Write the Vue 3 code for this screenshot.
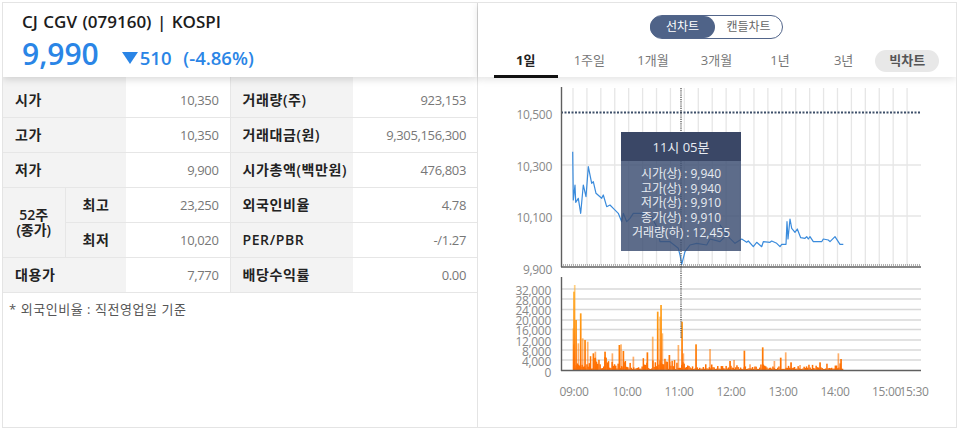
<script setup>
const rows = [
  { label: '시가', value: '10,350', label2: '거래량(주)', value2: '923,153' },
  { label: '고가', value: '10,350', label2: '거래대금(원)', value2: '9,305,156,300' },
  { label: '저가', value: '9,900', label2: '시가총액(백만원)', value2: '476,803' },
  { group: '52주<br>(종가)', sub: '최고', value: '23,250', label2: '외국인비율', value2: '4.78' },
  { sub: '최저', value: '10,020', label2: 'PER/PBR', value2: '-/1.27' },
  { label: '대용가', value: '7,770', label2: '배당수익률', value2: '0.00' }
]

const tabs = ['1일', '1주일', '1개월', '3개월', '1년', '3년']
const tooltip = ['시가(상) : 9,940', '고가(상) : 9,940', '저가(상) : 9,910', '종가(상) : 9,910', '거래량(하) : 12,455']

const priceLabels = [
  { y: 118.7, text: '10,500' },
  { y: 170.5, text: '10,300' },
  { y: 221.5, text: '10,100' },
  { y: 273.5, text: '9,900' }
]
const volumeLabels = [
  { y: 294.5, text: '32,000' },
  { y: 304.5, text: '28,000' },
  { y: 314.5, text: '24,000' },
  { y: 325, text: '20,000' },
  { y: 335, text: '16,000' },
  { y: 345.5, text: '12,000' },
  { y: 356, text: '8,000' },
  { y: 365.5, text: '4,000' },
  { y: 376.5, text: '0' }
]
const timeLabels = [
  { x: 574, text: '09:00' },
  { x: 627, text: '10:00' },
  { x: 679, text: '11:00' },
  { x: 731, text: '12:00' },
  { x: 783, text: '13:00' },
  { x: 835, text: '14:00' },
  { x: 886.5, text: '15:00' },
  { x: 914, text: '15:30' }
]

const gridX = Array.from({ length: 25 }, (_, i) => 573 + i * 13.92)
const volumeGrid = [289, 299, 309.5, 320, 329.5, 340, 350, 360]

// picked off the reference crops, left crop starts at x=510 and right crop at x=720, both at 3x
const leftLine = [
  [188, 200], [190, 345], [195, 300], [197, 352], [205, 340], [212, 385], [220, 300], [228, 335], [235, 245],
  [245, 295], [250, 290], [258, 325], [275, 340], [280, 330], [290, 365], [300, 360], [310, 370], [325, 385],
  [335, 410], [340, 385], [350, 410], [360, 400], [370, 385], [400, 385], [425, 395], [440, 425], [450, 470],
  [480, 470], [505, 490], [510, 510], [515, 538], [525, 500], [540, 480], [560, 475], [590, 480], [600, 462],
  [630, 470], [650, 450]
]
const rightLine = [
  [0, 420], [15, 440], [30, 460], [45, 475], [65, 462], [80, 472], [85, 468], [100, 485], [110, 472], [125, 485],
  [130, 470], [150, 472], [155, 468], [170, 475], [180, 485], [185, 478], [198, 478], [201, 410], [204, 462],
  [210, 402], [215, 430], [225, 442], [232, 432], [242, 458], [255, 460], [260, 455], [265, 462], [270, 455],
  [280, 470], [305, 470], [310, 462], [325, 465], [330, 470], [345, 455], [360, 478], [370, 478]
]
const linePoints = [
  ...leftLine.map(([x, y]) => [510 + x / 3, 85 + y / 3]),
  ...rightLine.map(([x, y]) => [720 + x / 3, 85 + y / 3])
].map(p => p.map(n => n.toFixed(1)).join(',')).join(' ')

const spikes = [
  [510, 190, 160], [510, 192, 50], [510, 194, 30], [510, 198, 135], [510, 205, 205], [510, 212, 115], [510, 218, 190],
  [510, 225, 195], [510, 233, 200], [510, 250, 235], [510, 256, 230], [510, 285, 230], [510, 307, 235], [510, 328, 210],
  [510, 333, 208], [510, 340, 228], [510, 370, 245], [510, 412, 232], [510, 428, 185], [510, 443, 110], [510, 450, 125],
  [510, 453, 90], [510, 457, 175], [510, 478, 240], [510, 505, 210], [510, 516, 140], [510, 520, 235], [510, 558, 208],
  [510, 600, 222], [720, 30, 258], [720, 42, 255], [720, 73, 227], [720, 90, 268], [720, 128, 217], [720, 163, 258],
  [720, 182, 248], [720, 197, 232], [720, 213, 262], [720, 240, 270], [720, 300, 262], [720, 355, 235], [720, 363, 252]
].map(([from, x, y]) => ({ x: from + x / 3 - 0.8, y: 275 + y / 3, w: 1.7, soft: true }))

let seed = 17
const next = () => {
  seed = (seed * 9301 + 49297) % 233280
  return seed / 233280
}
const noise = []
for (let x = 573; x < 843; x += 1.2) {
  const reach = x < 600 ? 30 : x < 690 ? 16 : 6
  noise.push({ x, y: 369 - next() * next() * reach, w: 1.5, soft: false })
}
const bars = [...spikes, ...noise]
</script>

<template>
  <div class="frame">
    <section class="quote">
      <header class="quote-head">
        <h1>CJ CGV (079160) | KOSPI</h1>
        <div class="price-line">
          <strong class="price">9,990</strong>
          <i class="down-mark"></i>
          <span class="change">510 (-4.86%)</span>
        </div>
      </header>

      <table class="info">
        <colgroup>
          <col class="c1"><col class="c2"><col class="c3"><col class="c4"><col class="c5">
        </colgroup>
        <tbody>
          <tr v-for="(row, i) in rows" :key="i" :class="{ first: i === 0 }">
            <th v-if="row.label" colspan="2" class="lbl">{{ row.label }}</th>
            <th v-if="row.group" rowspan="2" class="lbl group" v-html="row.group"></th>
            <th v-if="row.sub" class="lbl sub">{{ row.sub }}</th>
            <td class="val">{{ row.value }}</td>
            <th class="lbl second">{{ row.label2 }}</th>
            <td class="val">{{ row.value2 }}</td>
          </tr>
        </tbody>
      </table>
      <p class="note">* 외국인비율 : 직전영업일 기준</p>
    </section>

    <section class="chart-side">
      <header class="chart-head">
        <div class="toggle">
          <span class="on">선차트</span>
          <span>캔들차트</span>
        </div>
        <nav class="tabs">
          <a v-for="(tab, i) in tabs" :key="tab" class="tab" :class="{ active: i === 0 }">{{ tab }}</a>
          <a class="tab big"><span>빅차트</span></a>
        </nav>
      </header>

      <div class="chart">
        <svg class="plot" width="478" height="348" viewBox="478 77 478 348">
          <defs>
            <linearGradient id="volFill" gradientUnits="userSpaceOnUse" x1="0" y1="371" x2="0" y2="285">
              <stop offset="0" stop-color="#ff6a00" />
              <stop offset="0.5" stop-color="#ff9410" />
              <stop offset="1" stop-color="#ffb030" />
            </linearGradient>
          </defs>

          <line v-for="x in gridX" :key="x" class="grid" :x1="x" :x2="x" y1="88" y2="265" />
          <line class="grid" x1="561" x2="921" y1="165" y2="165" />
          <line class="grid" x1="561" x2="921" y1="216" y2="216" />
          <line class="dots strong" x1="561" x2="921" y1="112.5" y2="112.5" />
          <line class="dots" x1="561" x2="921" y1="265" y2="265" />
          <line class="axis" x1="561" x2="921" y1="267" y2="267" />
          <line class="axis" x1="561.5" x2="561.5" y1="87" y2="267" />
          <polyline class="price-path" :points="linePoints" />

          <line v-for="y in volumeGrid" :key="y" class="grid vol" x1="561" x2="921" :y1="y" :y2="y" />
          <line class="axis" x1="561.5" x2="561.5" y1="277" y2="371" />
          <rect
            v-for="(bar, i) in bars"
            :key="i"
            class="bar"
            :class="{ soft: bar.soft && i % 2 === 0 }"
            :x="bar.x"
            :y="bar.y"
            :width="bar.w"
            :height="370.5 - bar.y"
          />
          <line class="axis" x1="561" x2="921" y1="370.5" y2="370.5" />

          <line class="cross" x1="681" x2="681" y1="88" y2="338" />

          <text v-for="l in priceLabels" :key="l.text" class="tick" x="552" :y="l.y" text-anchor="end">{{ l.text }}</text>
          <text v-for="l in volumeLabels" :key="l.text" class="tick" x="551" :y="l.y" text-anchor="end">{{ l.text }}</text>
          <text v-for="l in timeLabels" :key="l.text" class="tick" :x="l.x" y="396" text-anchor="middle">{{ l.text }}</text>
        </svg>

        <div class="tooltip">
          <div class="tooltip-head">11시 05분</div>
          <div class="tooltip-body">
            <div v-for="line in tooltip" :key="line">{{ line }}</div>
          </div>
        </div>
      </div>
    </section>
  </div>
</template>

<style>
html, body {
  margin: 0;
  background: #fff;
}
</style>

<style scoped>
.frame {
  display: flex;
  box-sizing: border-box;
  width: 955px;
  height: 426px;
  margin: 2px 0 0 2px;
  border: 1px solid #e4e4e4;
  font-family: "Open Sans", "Noto Sans CJK KR", sans-serif;
  color: #222;
  overflow: hidden;
}

.quote {
  width: 474px;
  flex: none;
  border-right: 1px solid #e4e4e4;
}

.quote-head {
  position: relative;
  z-index: 2;
  box-sizing: border-box;
  height: 74px;
  padding: 8px 0 0 19px;
  background: #fff;
  box-shadow: 0 2px 8px rgba(0, 0, 0, 0.16);
}

.quote-head h1 {
  margin: 0;
  font-size: 17px;
  line-height: 22px;
  font-weight: 600;
  word-spacing: 1px;
  color: #1c1c1c;
}

.price-line {
  display: flex;
  align-items: baseline;
}

.price {
  font-size: 30px;
  line-height: 42px;
  font-weight: 600;
  color: #2a85e6;
}

.down-mark {
  align-self: center;
  width: 0;
  height: 0;
  margin: 8px 0 0 23px;
  border-top: 12px solid #2a85e6;
  border-left: 8px solid transparent;
  border-right: 8px solid transparent;
}

.change {
  margin-left: 2px;
  font-size: 18.5px;
  font-weight: 600;
  word-spacing: 7px;
  color: #2a85e6;
}

.info {
  width: 474px;
  table-layout: fixed;
  border-collapse: collapse;
  font-size: 13px;
}

.c1 { width: 62px; }
.c2 { width: 61px; }
.c3 { width: 104px; }
.c4 { width: 123px; }
.c5 { width: 124px; }

.info tr {
  height: 35px;
  border-bottom: 1px solid #e6e6e6;
}

.info tr.first {
  height: 40px;
}

.info tr.first th,
.info tr.first td {
  padding-top: 7px;
}

.lbl {
  padding: 0 0 0 12px;
  background: #f3f3f3;
  text-align: left;
  font-size: 14px;
  line-height: 14px;
  font-weight: 600;
  letter-spacing: 0.6px;
  white-space: nowrap;
  color: #222;
}

.group {
  padding: 0;
  text-align: center;
  border-right: 1px solid #e6e6e6;
  line-height: 15px;
  letter-spacing: 0;
}

.sub {
  padding-left: 17px;
}

.second {
  border-left: 1px solid #e6e6e6;
}

.val {
  padding: 0 11px 0 0;
  text-align: right;
  letter-spacing: -0.35px;
  color: #777;
}

.note {
  margin: 7px 0 0 6px;
  font-size: 13px;
  line-height: 18px;
  letter-spacing: 0.55px;
  color: #555;
}

.chart-side {
  flex: 1;
  min-width: 0;
}

.chart-head {
  position: relative;
  z-index: 2;
  box-sizing: border-box;
  height: 74px;
  padding-top: 12px;
  background: #fff;
  box-shadow: 0 2px 8px rgba(0, 0, 0, 0.12);
}

.toggle {
  display: flex;
  box-sizing: border-box;
  width: 133px;
  height: 24px;
  margin-left: 172px;
  border: 1px solid #52658a;
  border-radius: 12px;
  font-size: 12px;
  line-height: 22px;
  color: #666;
}

.toggle span {
  flex: 1;
  text-align: center;
}

.toggle .on {
  flex: none;
  width: 65px;
  margin-left: -1px;
  border-radius: 12px;
  background: #4f6388;
  color: #fff;
}

.tabs {
  display: grid;
  grid-template-columns: repeat(7, 1fr);
  width: 445px;
  margin: 1px 0 0 16px;
}

.tab {
  box-sizing: border-box;
  height: 38px;
  padding-top: 10px;
  text-align: center;
  font-size: 13px;
  line-height: 20px;
  color: #777;
}

.tab.active {
  border-bottom: 3px solid #111;
  font-weight: 700;
  color: #222;
}

.tab.big {
  padding-top: 10px;
}

.tab.big span {
  display: block;
  height: 22px;
  border-radius: 11px;
  background: #e8e8e8;
  font-weight: 700;
  line-height: 21px;
  color: #555;
}

.chart {
  position: relative;
}

.plot {
  display: block;
}

.grid {
  stroke: #e6e6e6;
  stroke-width: 1.3;
}

.grid.vol {
  stroke: #d8d8d8;
}

.axis {
  stroke: #5f5f5f;
  stroke-width: 1.4;
}

.dots {
  stroke: #666;
  stroke-width: 1.2;
  stroke-dasharray: 1 1;
}

.dots.strong {
  stroke: #3d4f69;
  stroke-width: 2;
  stroke-dasharray: 2 1.5;
}

.cross {
  stroke: #444;
  stroke-width: 1.2;
  stroke-dasharray: 1.2 1;
}

.price-path {
  fill: none;
  stroke: #3a8bdc;
  stroke-width: 1.2;
  stroke-linejoin: round;
}

.bar {
  fill: url(#volFill);
}

.bar.soft {
  opacity: 0.6;
}

.tick {
  font-size: 12px;
  letter-spacing: -0.3px;
  fill: #888;
}

.tooltip {
  position: absolute;
  left: 143px;
  top: 55px;
  width: 120px;
  height: 119px;
  font-size: 12px;
  text-align: center;
  color: #e8ecf2;
}

.tooltip-head {
  height: 29px;
  background: #3a4766;
  font-size: 13px;
  line-height: 30px;
}

.tooltip-body {
  height: 90px;
  padding-top: 6px;
  box-sizing: border-box;
  background: rgba(62, 80, 116, 0.84);
  line-height: 14.7px;
}
</style>
